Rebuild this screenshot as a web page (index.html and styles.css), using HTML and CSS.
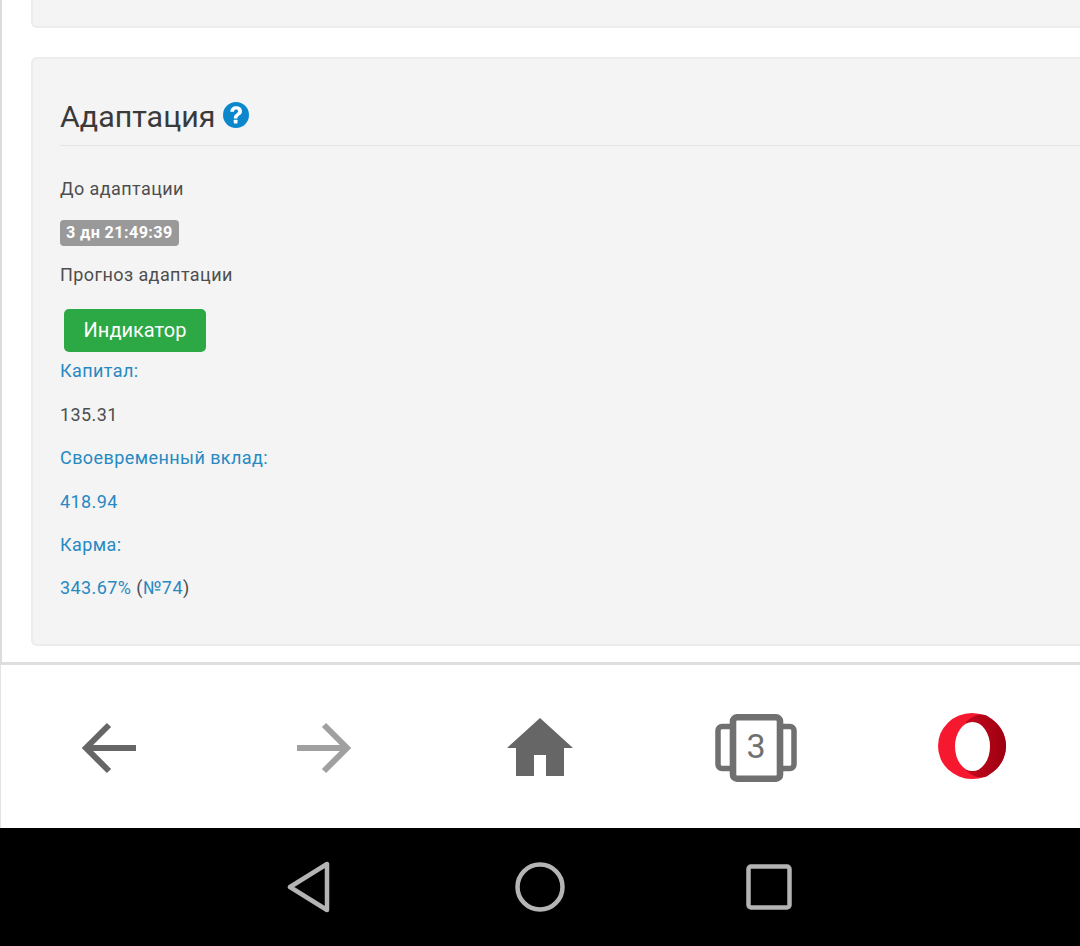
FILE: index.html
```html
<!DOCTYPE html>
<html lang="ru">
<head>
<meta charset="utf-8">
<title>Адаптация</title>
<link rel="stylesheet" href="styles.css">
</head>
<body>
<main class="page">
  <div class="card card-top"></div>
  <section class="card card-main">
    <h2 class="title">Адаптация
      <svg class="help" viewBox="0 0 26 26" width="26" height="26"><circle cx="13" cy="13" r="13" fill="#0d87cc"/><path d="M7.300 9.800C7.500 6.200 9.800 4.300 13.200 4.300c3.400 0 5.800 2 5.800 4.900 0 2.100-1.100 3.300-2.800 4.400-1.400 1-1.700 1.500-1.700 2.900h-3.700c0-2.400.6-3.500 2.400-4.800 1.200-.9 1.900-1.500 1.900-2.500 0-1.100-.9-1.700-2-1.700-1.300 0-2 .8-2.100 2.300z" fill="#fff"/><rect x="10.800" y="17.700" width="3.700" height="3.700" rx=".6" fill="#fff"/></svg>
    </h2>
    <p class="line">До адаптации</p>
    <p class="line"><span class="badge">3 дн 21:49:39</span></p>
    <p class="line">Прогноз адаптации</p>
    <div class="btn-row"><button class="btn">Индикатор</button></div>
    <p class="line link">Капитал:</p>
    <p class="line">135.31</p>
    <p class="line link">Своевременный вклад:</p>
    <p class="line link">418.94</p>
    <p class="line link">Карма:</p>
    <p class="line"><span class="link">343.67%</span> (<span class="link">№74</span>)</p>
  </section>
</main>
<nav class="toolbar">
  <svg class="tool" width="56" height="52" viewBox="0 0 56 52"><path d="M55 26H6M28 3 5 26l23 23" fill="none" stroke="#666" stroke-width="6"/></svg>
  <svg class="tool" width="56" height="52" viewBox="0 0 56 52"><path d="M1 26h49M28 3l23 23-23 23" fill="none" stroke="#a0a0a0" stroke-width="6"/></svg>
  <svg class="tool" width="66" height="58" viewBox="0 0 66 58"><path d="M33 0 66 30H57V58H39V37H27V58H9V30H0z" fill="#666"/></svg>
  <div class="tabs">
    <svg width="82" height="68" viewBox="0 0 82 68"><path d="M16 12.500H7a4 4 0 0 0-4 4v34a4 4 0 0 0 4 4h9M66 12.500h9a4 4 0 0 1 4 4v34a4 4 0 0 1-4 4h-9" fill="none" stroke="#707070" stroke-width="5.500"/><rect x="18" y="3.300" width="47" height="61.400" rx="4" fill="none" stroke="#707070" stroke-width="6.600"/></svg>
    <span class="tab-count">3</span>
  </div>
  <svg class="tool" width="68" height="68" viewBox="0 0 68 68"><defs><linearGradient id="dark" x1="0" x2="1" y1="0" y2="0"><stop offset="0" stop-color="#c4081e"/><stop offset="1" stop-color="#9c0010"/></linearGradient></defs><ellipse cx="34" cy="33" rx="34" ry="33" fill="#f5182f"/><path d="M28 9C36 1 46-1 52 5A34 33 0 0 1 52 61C46 67 36 65 28 57z" fill="url(#dark)"/><ellipse cx="34.500" cy="33.500" rx="17.500" ry="24.500" fill="#fff"/></svg>
</nav>
<footer class="sysbar">
  <svg width="44" height="52" viewBox="0 0 44 52"><path d="M3 26 40 3v46z" fill="none" stroke="#b4b4b4" stroke-width="4.500" stroke-linejoin="round"/></svg>
  <svg width="50" height="50" viewBox="0 0 50 50"><circle cx="25" cy="25" r="22.500" fill="none" stroke="#b4b4b4" stroke-width="4.500"/></svg>
  <svg width="46" height="46" viewBox="0 0 46 46"><rect x="2.500" y="2.500" width="41" height="41" rx="2.500" fill="none" stroke="#b4b4b4" stroke-width="4.500"/></svg>
</footer>
</body>
</html>
```
FILE: styles.css
```css
* { box-sizing: border-box; }
html, body { margin: 0; padding: 0; }
body {
  width: 1080px;
  height: 946px;
  overflow: hidden;
  background: #fff;
  font-family: Roboto, "Liberation Sans", sans-serif;
  color: #4e4e4e;
}
.page {
  height: 665px;
  padding-left: 29px;
  border-left: 2px solid #dcdcdc;
  border-bottom: 3px solid #dedede;
  overflow: hidden;
}
.card {
  background: #f4f4f4;
  border: 2px solid #ececec;
  border-right: 0;
  border-radius: 6px 0 0 6px;
}
.card-top {
  height: 29px;
  margin-top: -1px;
  border-top: 0;
  border-radius: 0 0 0 6px;
}
.card-main {
  height: 589px;
  margin-top: 29px;
  padding: 0 0 0 27px;
}
.title {
  display: flex;
  align-items: center;
  gap: 8px;
  height: 87px;
  margin: 0 0 29.600px;
  padding-top: 28px;
  border-bottom: 1px solid #e4e4e4;
  font-size: 30.400px;
  font-weight: 400;
  color: #3a3a3a;
}
.help { flex: none; margin-top: -2px; }
.line {
  margin: 0 0 18.400px;
  height: 25px;
  font-size: 18px;
  line-height: 25px;
  letter-spacing: .42px;
}
.link { color: #2889c2; }
.badge {
  display: inline-block;
  height: 26px;
  padding: 0 6px;
  border-radius: 4px;
  background: #999;
  color: #fff;
  font-size: 16.200px;
  font-weight: 700;
  line-height: 26px;
  letter-spacing: .4px;
}
.btn-row {
  margin: 21.400px 0 6.600px 4px;
}
.btn {
  display: block;
  width: 142px;
  height: 43px;
  padding: 0;
  border: 0;
  border-radius: 5px;
  background: #2ca845;
  color: #fff;
  font: 400 20px/43px Roboto, "Liberation Sans", sans-serif;
}
.toolbar {
  position: relative;
  height: 163px;
  border-left: 1px solid #e4e4e4;
}
.tool, .tabs { position: absolute; }
.toolbar > :nth-child(1) { left: 80px; top: 57px; }
.toolbar > :nth-child(2) { left: 295px; top: 57px; }
.toolbar > :nth-child(3) { left: 506px; top: 53px; }
.toolbar > :nth-child(4) { left: 714px; top: 49px; width: 82px; height: 68px; }
.toolbar > :nth-child(5) { left: 937px; top: 48px; }
.tab-count {
  position: absolute;
  left: 0;
  right: 0;
  top: 13px;
  text-align: center;
  font-size: 34px;
  line-height: 38px;
  color: #707070;
}
.sysbar {
  position: relative;
  height: 118px;
  background: #000;
}
.sysbar svg { position: absolute; }
.sysbar svg:nth-child(1) { left: 287px; top: 33px; }
.sysbar svg:nth-child(2) { left: 515px; top: 34px; }
.sysbar svg:nth-child(3) { left: 746px; top: 36px; }
```
